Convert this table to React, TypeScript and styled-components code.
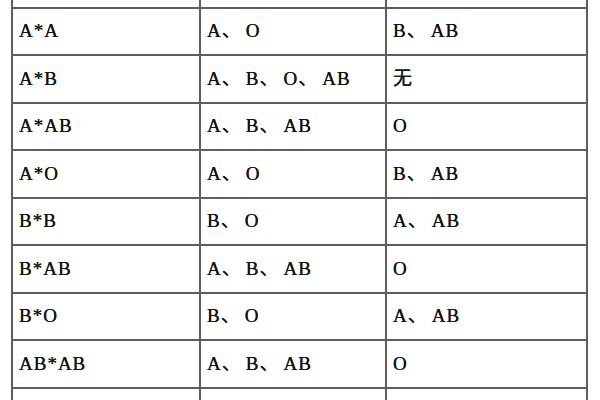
import { Fragment } from 'react';
import styled, { createGlobalStyle } from 'styled-components';

interface IRow {
  parents: string;
  possible: string[];
  impossible: string[];
}

const rows: IRow[] = [
  { parents: 'A*A', possible: ['A', 'O'], impossible: ['B', 'AB'] },
  { parents: 'A*B', possible: ['A', 'B', 'O', 'AB'], impossible: ['无'] },
  { parents: 'A*AB', possible: ['A', 'B', 'AB'], impossible: ['O'] },
  { parents: 'A*O', possible: ['A', 'O'], impossible: ['B', 'AB'] },
  { parents: 'B*B', possible: ['B', 'O'], impossible: ['A', 'AB'] },
  { parents: 'B*AB', possible: ['A', 'B', 'AB'], impossible: ['O'] },
  { parents: 'B*O', possible: ['B', 'O'], impossible: ['A', 'AB'] },
  { parents: 'AB*AB', possible: ['A', 'B', 'AB'], impossible: ['O'] },
];

const GlobalStyle = createGlobalStyle`
  html, body {
    margin: 0;
    padding: 0;
    background: #ffffff;
  }
  #root {
    width: 600px;
    height: 400px;
    overflow: hidden;
  }
`;

const Page = styled.div`
  padding-left: 11px;
  margin-top: -41px;
`;

const Table = styled.table`
  border-collapse: collapse;
  table-layout: fixed;
  width: 575px;
  font-family: "Liberation Serif", "Noto Sans CJK SC", serif;
  font-size: 19px;
  letter-spacing: 1px;
  color: #141414;
  text-shadow: 0 0 0.6px #000;
`;

const Col = styled.col<{ $w: number }>`
  width: ${(p) => p.$w}px;
`;

const Row = styled.tr`
  height: 47.5px;
`;

const Cell = styled.td`
  border: 2px solid #5e5e5e;
  padding: 0 0 0 6px;
  vertical-align: middle;
  white-space: nowrap;
  overflow: hidden;
  line-height: 22px;
`;

const Sep = styled.span`
  margin-right: 4px;
`;

const List = ({ items }: { items: string[] }) => (
  <>
    {items.map((it, i) => (
      <Fragment key={it}>
        {i > 0 && <Sep>、</Sep>}
        {it}
      </Fragment>
    ))}
  </>
);

const EmptyRow = () => (
  <Row>
    <Cell />
    <Cell />
    <Cell />
  </Row>
);

export default function App() {
  return (
    <>
      <GlobalStyle />
      <Page>
        <Table>
          <colgroup>
            <Col $w={188} />
            <Col $w={186} />
            <Col $w={201} />
          </colgroup>
          <tbody>
            <EmptyRow />
            {rows.map((r) => (
              <Row key={r.parents}>
                <Cell>{r.parents}</Cell>
                <Cell>
                  <List items={r.possible} />
                </Cell>
                <Cell>
                  <List items={r.impossible} />
                </Cell>
              </Row>
            ))}
            <EmptyRow />
          </tbody>
        </Table>
      </Page>
    </>
  );
}
